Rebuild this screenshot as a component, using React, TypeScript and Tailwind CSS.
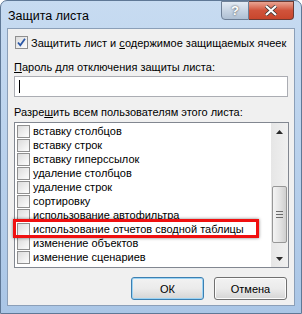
import React from "react";

const items = [
  "вставку столбцов",
  "вставку строк",
  "вставку гиперссылок",
  "удаление столбцов",
  "удаление строк",
  "сортировку",
  "использование автофильтра",
  "использование отчетов сводной таблицы",
  "изменение объектов",
  "изменение сценариев",
];

function Box({ checked = false }: { checked?: boolean }) {
  return (
    <div className="w-[13px] h-[13px] border border-[#8f8f8f] bg-gradient-to-br from-[#dcdcdc] to-[#fdfdfd] flex items-center justify-center shrink-0">
      {checked && (
        <svg width="11" height="11" viewBox="0 0 11 11">
          <path d="M2 5.5 L4.3 8.3 L9 1.8" fill="none" stroke="#2a57a6" strokeWidth="1.8" />
        </svg>
      )}
    </div>
  );
}

export default function App() {
  return (
    <div
      className="w-[302px] h-[314px] bg-gradient-to-b from-[#c7dbf1] via-[#b9d1ec] to-[#aac6e6] rounded-t-[7px] border border-[#5f7896] flex flex-col text-[11px] leading-[14px] text-black overflow-hidden"
      style={{ fontFamily: '"Liberation Sans", Arial, sans-serif' }}
    >
      {/* title bar */}
      <div className="h-[27px] flex items-start shrink-0">
        <div className="pl-[7px] pt-[8px] text-[12.5px]">Защита листа</div>
        <div className="ml-auto mr-[7px] flex">
          <div className="w-[28px] h-[19px] border border-[#6d7f96] rounded-bl-[4px] bg-gradient-to-b from-[#e3ebf4] via-[#c7d4e3] to-[#aebfd3] flex items-center justify-center text-white font-bold text-[13px] [text-shadow:0_0_2px_#333]">
            ?
          </div>
          <div className="w-[45px] h-[19px] border border-l-0 border-[#6d3a32] rounded-br-[4px] bg-gradient-to-b from-[#e8a493] via-[#d0533b] to-[#c8462c] flex items-center justify-center">
            <svg width="14" height="11" viewBox="0 0 14 11">
              <path d="M2 1 L12 10 M12 1 L2 10" stroke="#333" strokeWidth="3.6" />
              <path d="M2 1 L12 10 M12 1 L2 10" stroke="#fff" strokeWidth="2.2" />
            </svg>
          </div>
        </div>
      </div>

      {/* client area */}
      <div className="mx-[6px] mb-[7px] flex-1 bg-[#f0f0f0] border border-[#8b9fb8] flex flex-col px-[6px]">
        <div className="flex items-center gap-[3px] mt-[6px] ml-[1px] h-[15px]">
          <Box checked />
          <span className="whitespace-nowrap">
            Защитить лист и <u>с</u>одержимое защищаемых ячеек
          </span>
        </div>

        <div className="mt-[10px] whitespace-nowrap">
          <u>П</u>ароль для отключения защиты листа:
        </div>
        <div className="mt-[2px] h-[21px] w-[274px] bg-white border border-[#abadb3] flex items-center pl-[4px] shrink-0">
          <div className="w-px h-[13px] bg-black" />
        </div>

        <div className="mt-[8px] whitespace-nowrap">
          Разре<u>ш</u>ить всем пользователям этого листа:
        </div>
        <div className="mt-[3px] h-[146px] w-[275px] bg-white border border-[#828790] flex shrink-0">
          <div className="flex-1 flex flex-col pt-[1px] pl-[2px]">
            {items.map((t, i) =>
              i === 7 ? (
                <div key={t} className="h-[14px] flex items-center relative">
                  <div className="absolute left-[-4px] top-[-3px] w-[246px] h-[19px] border-[3px] border-[#f01010] shadow-[0_0_3px_rgba(0,0,0,0.5)]" />
                  <Box />
                  <span className="ml-[3px] whitespace-nowrap">{t}</span>
                </div>
              ) : (
                <div key={t} className="h-[14px] flex items-center">
                  <Box />
                  <span className="ml-[3px] whitespace-nowrap">{t}</span>
                </div>
              )
            )}
          </div>
          <div className="w-[17px] bg-gradient-to-r from-[#e6e6e6] to-[#f0f0f0] flex flex-col items-center">
            <div className="h-[17px] flex items-center justify-center">
              <svg width="7" height="4" viewBox="0 0 7 4">
                <path d="M0 4 L3.5 0 L7 4 Z" fill="#2a2a2a" />
              </svg>
            </div>
            <div className="mt-[46px] w-[15px] h-[57px] border border-[#979797] rounded-[2px] bg-gradient-to-r from-[#f4f4f4] via-[#e4e4e4] to-[#cfcfcf] flex flex-col items-center justify-center gap-[2px]">
              <div className="w-[7px] h-px bg-[#6b6b6b]" />
              <div className="w-[7px] h-px bg-[#6b6b6b]" />
              <div className="w-[7px] h-px bg-[#6b6b6b]" />
            </div>
            <div className="mt-auto h-[17px] flex items-center justify-center">
              <svg width="7" height="4" viewBox="0 0 7 4">
                <path d="M0 0 L7 0 L3.5 4 Z" fill="#2a2a2a" />
              </svg>
            </div>
          </div>
        </div>

        <div className="mt-[9px] flex justify-end gap-[10px] pr-[1px]">
          <div className="w-[73px] h-[23px] rounded-[3px] border border-[#3c7fb1] bg-gradient-to-b from-[#f2f2f2] via-[#ebebeb] to-[#d5d5d5] shadow-[inset_0_0_0_1px_#9bd3f4] flex items-center justify-center">
            ОК
          </div>
          <div className="w-[73px] h-[23px] rounded-[3px] border border-[#707070] bg-gradient-to-b from-[#f2f2f2] via-[#ebebeb] to-[#d5d5d5] shadow-[inset_0_0_0_1px_#fcfcfc] flex items-center justify-center">
            Отмена
          </div>
        </div>
      </div>
    </div>
  );
}
